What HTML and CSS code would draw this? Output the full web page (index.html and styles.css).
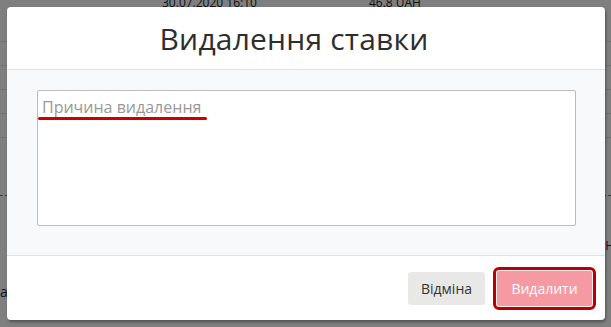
FILE: index.html
```html
<!DOCTYPE html>
<html lang="uk">
<head>
  <meta charset="UTF-8" />
  <meta name="viewport" content="width=device-width, initial-scale=1.0"/>
  <title>Видалення ставки</title>
  <link rel="stylesheet" href="styles.css">
</head>
<body>
  <!-- Таблиця ставок під модалкою -->
  <div class="page">
    <div class="row row-first">
      <span class="cell cell-date">30.07.2020 16:10</span>
      <span class="cell cell-sum">46.8 UAH</span>
    </div>
    <div class="row"></div>
    <div class="row"></div>
    <div class="row"></div>
    <div class="row"></div>
    <div class="row row-green"></div>
    <div class="row row-text row-right"><span>Н</span></div>
    <div class="row row-text row-left"><span>ла</span></div>
  </div>

  <div class="overlay"></div>

  <!-- Модалка -->
  <div class="modal">
    <div class="modal-header">
      <h2>Видалення ставки</h2>
    </div>
    <div class="modal-body">
      <div class="field">
        <textarea placeholder="Причина видалення"></textarea>
        <span class="mark"></span>
      </div>
    </div>
    <div class="modal-footer">
      <button class="btn btn-cancel">Відміна</button>
      <button class="btn btn-delete">Видалити</button>
    </div>
  </div>
</body>
</html>
```

FILE: styles.css
```css
body {
  margin: 0;
  font-family: 'Open Sans', sans-serif;
  background: #fff;
  width: 611px;
  height: 327px;
  overflow: hidden;
  position: relative;
}

.row {
  height: 23px;
  border-bottom: 1px solid #e0e0e0;
  display: flex;
  font-size: 14px;
  color: #222;
}

.row-first {
  height: 41px;
  align-items: flex-start;
}

.row-green {
  height: 57px;
  border-bottom: 1px dashed #2a9a6a;
}

.row-text {
  border-bottom: none;
  align-items: flex-end;
  color: #1a2a55;
}

.row-right {
  height: 58px;
  font-size: 12px;
  line-height: 16px;
  justify-content: flex-end;
  margin-right: -3px;
}

.row-left {
  height: 47px;
  font-size: 14px;
  line-height: 19px;
  margin-left: -8px;
}

.cell {
  font-size: 12px;
  line-height: 16px;
  margin-top: -5px;
}

.cell-date {
  margin-left: 162px;
}

.cell-sum {
  margin-left: 112px;
}

.overlay {
  position: absolute;
  inset: 0;
  background: rgba(0, 0, 0, 0.5);
}

.modal {
  position: absolute;
  left: 7px;
  top: 7px;
  width: 598px;
  height: 313px;
  background: #fff;
  border-radius: 4px;
  box-shadow: 1px 2px 3px rgba(0, 0, 0, 0.35);
  display: flex;
  flex-direction: column;
  overflow: hidden;
}

.modal-header {
  height: 62px;
  border-bottom: 1px solid #e2e2e2;
  display: flex;
  align-items: center;
  justify-content: center;
  padding-right: 24px;
}

.modal-header h2 {
  margin: 0;
  font-size: 30px;
  font-weight: 500;
  color: #2e2e2e;
  letter-spacing: 0.2px;
}

.modal-body {
  height: 186px;
  background: #f8f9fb;
  border-bottom: 1px solid #e2e2e2;
  padding: 20px 29px 0 30px;
  box-sizing: border-box;
}

.field {
  position: relative;
}

textarea {
  display: block;
  width: 100%;
  height: 136px;
  box-sizing: border-box;
  border: 1px solid #bcbcbc;
  border-radius: 2px;
  background: #fff;
  padding: 5px 4px;
  font-family: 'Open Sans', sans-serif;
  font-size: 16px;
  resize: none;
}

textarea::placeholder {
  color: #999;
}

.mark {
  position: absolute;
  left: 1px;
  top: 27px;
  width: 169px;
  height: 3px;
  border-radius: 2px;
  background: #c00;
}

.modal-footer {
  flex: 1;
  display: flex;
  justify-content: flex-end;
  align-items: center;
  gap: 11px;
  padding: 0 12px 0 0;
}

.btn {
  font-family: 'Open Sans', sans-serif;
  font-size: 14px;
  border-radius: 3px;
  cursor: pointer;
}

.btn-cancel {
  width: 77px;
  height: 33px;
  background: #e8e8e6;
  color: #333;
  border: none;
}

.btn-delete {
  width: 97px;
  height: 37px;
  background: #f59aa3;
  color: #fff;
  border: 1px solid #f6f0f0;
  outline: 3px solid #b80000;
  outline-offset: 0;
}
```
